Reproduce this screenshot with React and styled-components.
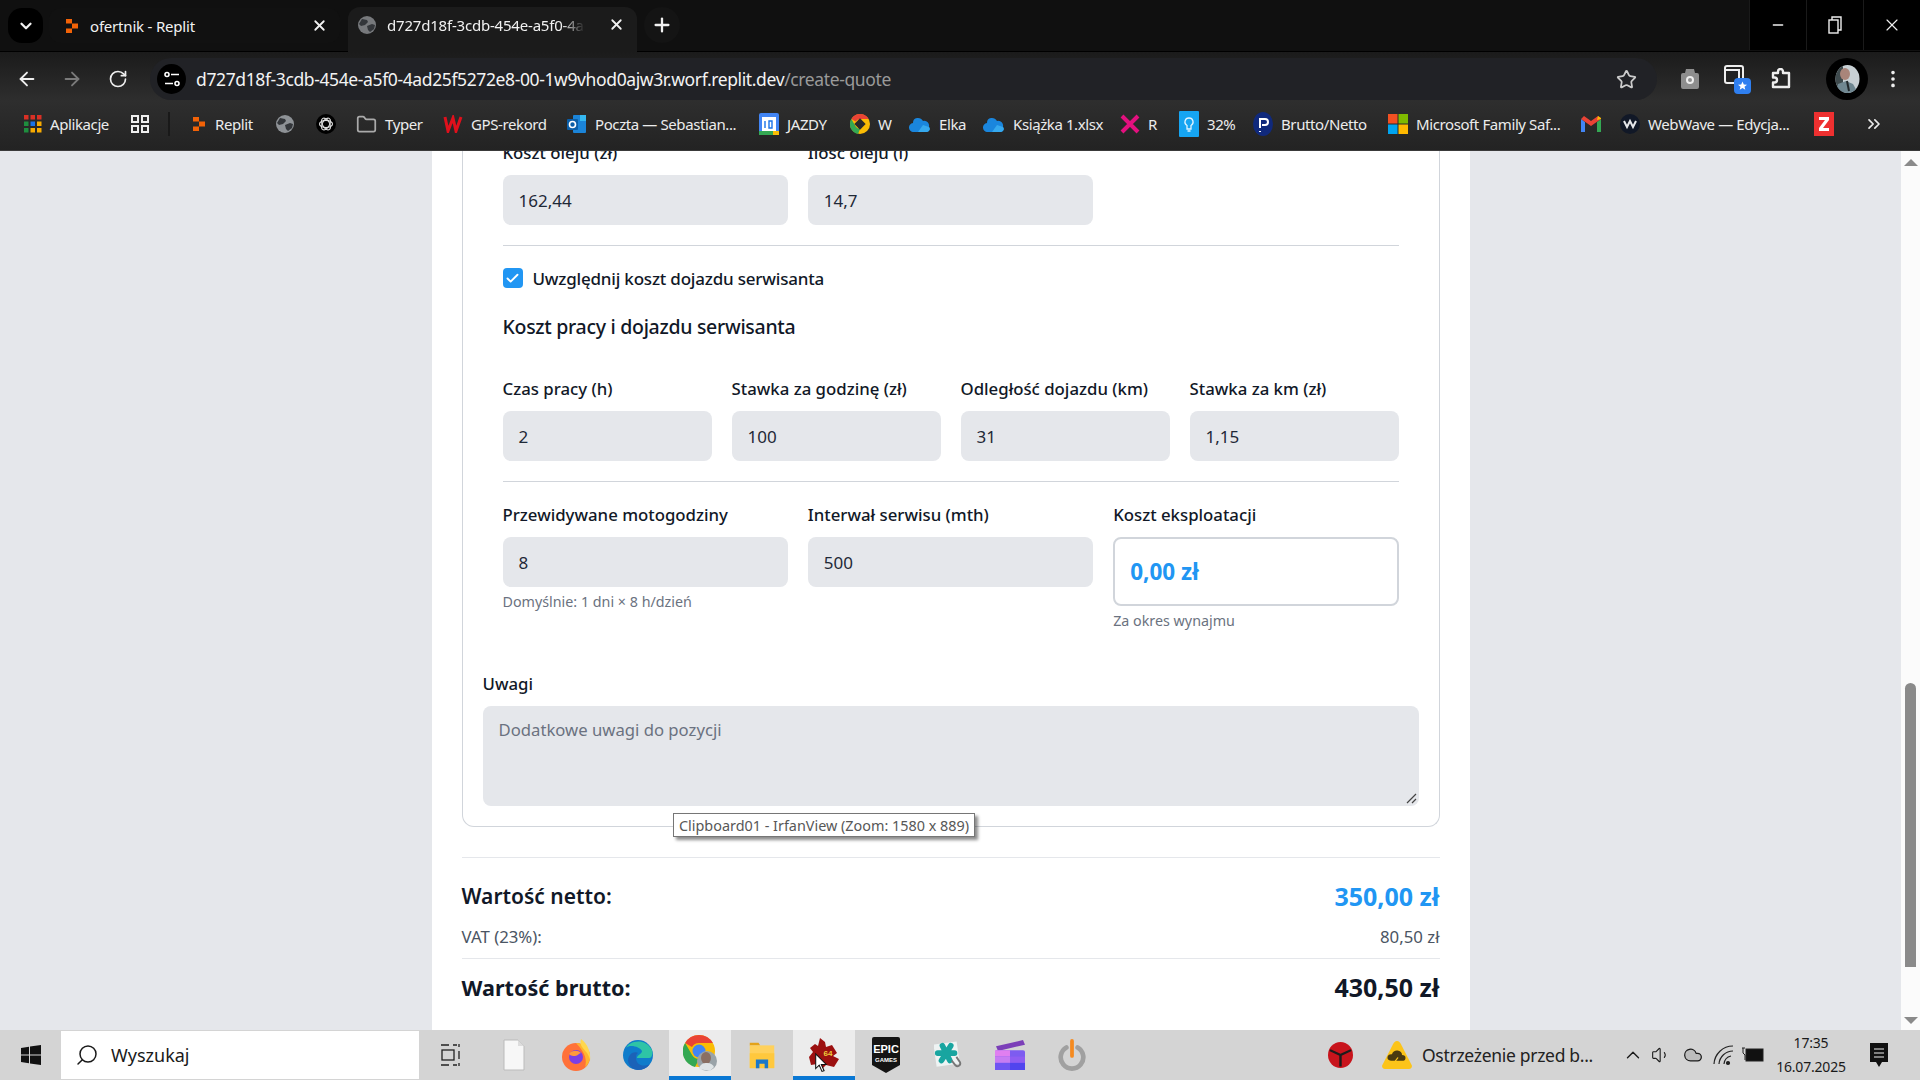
import styled, { createGlobalStyle } from 'styled-components';
import {
  ArrowLeft, ArrowRight, RotateCw, Star, X, Plus, ChevronDown, ChevronUp, EllipsisVertical,
  Search, Volume1, Cloud, ChevronsRight, Folder, Check, Minus,
} from 'lucide-react';

const GlobalStyle = createGlobalStyle`
  html, body { margin: 0; padding: 0; height: 100%; overflow: hidden; }
  body { font-family: "Noto Sans", "Liberation Sans", sans-serif; color: #111827; }
  #root { height: 100%; }
`;

const Screen = styled.div`
  display: flex;
  flex-direction: column;
  width: 1920px;
  height: 1080px;
  position: relative;
  overflow: hidden;
`;

/* browser chrome */
const TabStrip = styled.div`
  display: flex;
  height: 52px;
  padding-top: 7px;
  box-sizing: border-box;
  background: #101010;
  border-bottom: 1px solid #000;
  color: #f1f1f1;
  font-size: 15px;
  letter-spacing: -0.2px;
`;

const TabMenu = styled.div`
  width: 35px;
  height: 35px;
  margin: 1px 6px 0 8px;
  background: #000;
  border-radius: 14px;
  display: flex;
  align-items: center;
  justify-content: center;
`;

const Tab = styled.div`
  display: flex;
  align-items: center;
  flex: none;
  width: ${(p) => p.$w}px;
  box-sizing: border-box;
  padding-left: ${(p) => p.$pad}px;
  gap: ${(p) => (p.$active ? 11 : 10)}px;
  height: ${(p) => (p.$active ? 45 : 35)}px;
  margin: ${(p) => (p.$active ? '0 0 0 8px' : '1px 0 0 0')};
  padding-bottom: ${(p) => (p.$active ? 10 : 0)}px;
  background: ${(p) => (p.$active ? '#1b1b1b' : '#111')};
  border-radius: ${(p) => (p.$active ? '12px 12px 0 0' : '12px')};
`;

const TabTitle = styled.span`
  flex: 1;
  overflow: hidden;
  white-space: nowrap;
  ${(p) => p.$fade && 'mask-image: linear-gradient(to right, #000 88%, transparent);'}
`;

const TabClose = styled(X)`
  flex: none;
  margin: 0 12px;
`;

const NewTab = styled.div`
  width: 36px;
  height: 36px;
  margin-left: 7px;
  border-radius: 50%;
  background: #141414;
  display: flex;
  align-items: center;
  justify-content: center;
`;

const WindowButtons = styled.div`
  margin-left: auto;
  margin-top: -7px;
  display: flex;
  height: 50px;
  background: #000;
`;

const WindowButton = styled.div`
  width: 56px;
  display: flex;
  align-items: center;
  justify-content: center;
  border-left: 1px solid #1a1a1a;
`;

const Toolbars = styled.div`
  height: 95px;
  padding-top: 3px;
  background: linear-gradient(#1b1b1b, #2e2e2e 50%, #232323);
  border-bottom: 1px solid #3a3a3a;
`;

const NavRow = styled.div`
  display: flex;
  align-items: center;
  height: 48px;
  color: #f0f0f0;
`;

const NavIcon = styled.div`
  flex: none;
  width: ${(p) => p.$w}px;
  display: flex;
  justify-content: center;
  color: ${(p) => (p.$dim ? '#7a7a7a' : '#eee')};
`;

const Omnibox = styled.div`
  flex: none;
  width: 1507px;
  height: 42px;
  margin-left: 4px;
  border-radius: 21px;
  background: #212226;
  display: flex;
  align-items: center;
  box-sizing: border-box;
  padding: 0 20px 0 7px;
`;

const SiteBadge = styled.div`
  width: 29px;
  height: 30px;
  border-radius: 50%;
  background: #000;
  flex: none;
  display: flex;
  align-items: center;
  justify-content: center;
`;

const Url = styled.div`
  margin-left: 10px;
  flex: 1;
  font-size: 17.5px;
  letter-spacing: -0.38px;
  white-space: nowrap;
  color: #f3f3f3;
  span { color: #9a9a9a; }
`;

const Avatar = styled.div`
  width: 42px;
  height: 42px;
  margin-left: 15px;
  border-radius: 50%;
  background: #000;
  display: flex;
  align-items: center;
  justify-content: center;
  flex: none;
`;

const BookmarkRow = styled.div`
  display: flex;
  align-items: center;
  height: 42px;
  padding-left: 24px;
  color: #ececec;
  font-size: 15px;
  letter-spacing: -0.4px;
  white-space: nowrap;
`;

const Bookmark = styled.div`
  flex: none;
  width: ${(p) => p.$w}px;
  display: flex;
  align-items: center;
  gap: 8px;
`;

const BarDivider = styled.div`
  flex: none;
  width: 2px;
  height: 24px;
  background: #191919;
  margin-right: 21px;
`;

/* page */
const Viewport = styled.div`
  flex: 1;
  min-height: 0;
  display: flex;
  background: #e5e7eb;
  overflow: hidden;
`;

const PageArea = styled.div`
  flex: 1;
  display: flex;
  justify-content: center;
  overflow: hidden;
`;

const Panel = styled.main`
  width: 1038px;
  height: 900px;
  margin-top: -11px;
  padding: 0 30px;
  box-sizing: border-box;
  background: #fff;
  flex: none;
`;

const Card = styled.section`
  box-sizing: border-box;
  border: 1px solid #d1d5db;
  border-top: 0;
  border-radius: 0 0 12px 12px;
  padding: 0 20px 20px;
`;

const Inner = styled.div`
  padding: 0 20px;
`;

const FieldRow = styled.div`
  display: grid;
  grid-template-columns: repeat(${(p) => p.$cols}, 1fr);
  gap: 20px;
`;

const Field = styled.div`
  display: flex;
  flex-direction: column;
  min-width: 0;
`;

const Label = styled.label`
  display: block;
  height: 25px;
  line-height: 25px;
  margin-bottom: 10px;
  font-size: 16.8px;
  font-weight: 500;
  color: #111827;
  white-space: nowrap;
`;

const Input = styled.div`
  height: 50px;
  box-sizing: border-box;
  padding: 0 16px;
  display: flex;
  align-items: center;
  background: #e5e7eb;
  border-radius: 8px;
  font-size: 17px;
  color: #1f2937;
`;

const Divider = styled.hr`
  border: 0;
  height: 1px;
  margin: 20px 0;
  background: #d1d5db;
`;

const CheckRow = styled.div`
  display: flex;
  align-items: center;
  gap: 10px;
  height: 20px;
  margin-top: 22px;
  font-size: 17px;
  font-weight: 500;
  letter-spacing: -0.2px;
`;

const CheckBox = styled.div`
  width: 20px;
  height: 20px;
  border-radius: 4px;
  background: #2196f3;
  color: #fff;
  display: flex;
  align-items: center;
  justify-content: center;
`;

const SectionTitle = styled.h3`
  margin: 22px 0 32px;
  height: 34px;
  line-height: 34px;
  font-size: 19.5px;
  font-weight: 500;
  letter-spacing: -0.3px;
  color: #111827;
`;

const ResultBox = styled.div`
  height: 69px;
  box-sizing: border-box;
  border: 2px solid #d1d5db;
  border-radius: 8px;
  padding: 0 15px;
  display: flex;
  align-items: center;
  font-size: 22.5px;
  font-weight: 700;
  color: #2196f3;
`;

const Hint = styled.div`
  margin-top: 5px;
  height: 20px;
  line-height: 20px;
  font-size: 14.3px;
  color: #6b7280;
  white-space: nowrap;
`;

const NotesWrap = styled.div`
  margin-top: 40px;
`;

const Notes = styled.div`
  height: 100px;
  box-sizing: border-box;
  padding: 12px 16px;
  line-height: 24px;
  background: #e5e7eb;
  border-radius: 8px;
  font-size: 16.7px;
  color: #6b7280;
  position: relative;
`;

const Grip = styled.svg`
  position: absolute;
  right: 2px;
  bottom: 2px;
`;

const Summary = styled.div`
  margin-top: 30px;
  padding-top: 20px;
  border-top: 1px solid #e5e7eb;
`;

const SummaryRow = styled.div`
  display: flex;
  justify-content: space-between;
  align-items: center;
  height: ${(p) => p.$h}px;
  font-size: ${(p) => p.$size}px;
  font-weight: ${(p) => p.$weight};
  color: ${(p) => p.$color || '#111827'};
`;

const Amount = styled.span`
  color: ${(p) => p.$color || 'inherit'};
  font-weight: 700;
  font-size: 25px;
`;

const Rule = styled.div`
  height: 1px;
  background: #e5e7eb;
`;

const Scrollbar = styled.div`
  flex: none;
  width: 19px;
  background: #fbfbfb;
  display: flex;
  flex-direction: column;
  align-items: center;
  padding: 8px 0 6px;
  box-sizing: border-box;
`;

const Thumb = styled.div`
  margin-top: 517px;
  width: 11px;
  height: 284px;
  border-radius: 6px 6px 0 0;
  background: #8a8a8a;
`;

const Arrow = styled.div`
  width: 0;
  height: 0;
  margin-top: ${(p) => (p.$down ? 'auto' : '0')};
  border-left: 7px solid transparent;
  border-right: 7px solid transparent;
  border-${(p) => (p.$down ? 'top' : 'bottom')}: 7px solid #8a8a8a;
`;

const Tooltip = styled.div`
  position: absolute;
  left: 673px;
  top: 813px;
  height: 24px;
  box-sizing: border-box;
  padding: 0 5px;
  display: flex;
  align-items: center;
  font-size: 14.4px;
  background: #fff;
  border: 1px solid #767676;
  box-shadow: 3px 3px 3px rgba(0, 0, 0, 0.45);
  color: #575757;
  white-space: nowrap;
`;

/* taskbar */
const Taskbar = styled.footer`
  height: 50px;
  display: flex;
  align-items: stretch;
  background: #d4d4d4;
  color: #1a1a1a;
  flex: none;
`;

const StartButton = styled.div`
  width: 61px;
  display: flex;
  align-items: center;
  justify-content: center;
  flex: none;
`;

const SearchBox = styled.div`
  width: 358px;
  margin: 1px 0;
  background: #fff;
  display: flex;
  align-items: center;
  gap: 12px;
  padding-left: 14px;
  box-sizing: border-box;
  font-size: 18px;
  flex: none;
`;

const SearchGlyph = styled(Search)`
  transform: scaleX(-1);
`;

const TaskCell = styled.div`
  flex: none;
  width: ${(p) => p.$w || 62}px;
  display: flex;
  align-items: center;
  justify-content: center;
  box-sizing: border-box;
  background: ${(p) => (p.$open ? '#ececec' : 'transparent')};
  border-bottom: ${(p) => (p.$open ? '4px solid #0a78d4' : '0')};
`;

const Spacer = styled.div`
  flex: 1;
`;

const Tray = styled.div`
  display: flex;
  align-items: center;
  flex: none;
  padding-right: 17px;
`;

const TrayCell = styled.div`
  flex: none;
  width: ${(p) => p.$w}px;
  margin-right: ${(p) => p.$right || 0}px;
  display: flex;
  align-items: center;
  justify-content: center;
`;

const NewsText = styled.div`
  width: 199px;
  font-size: 17.5px;
  letter-spacing: -0.3px;
  white-space: nowrap;
  color: #222;
`;

const Clock = styled.div`
  width: 88px;
  text-align: center;
  font-size: 14px;
  letter-spacing: -0.2px;
  line-height: 24px;
`;

const Cursor = styled.svg`
  position: absolute;
  left: 815px;
  top: 1053px;
`;

const ReplitIcon = ({ size = 16 }) => (
  <svg width={size} height={size} viewBox="0 0 16 16">
    <path d="M2 1h6v4.500H2zM8 5.500h6v5H8zM2 10.500h6V15H2z" fill="#f26207" />
  </svg>
);

const Globe = ({ size = 18, color = '#8e9296' }) => (
  <svg width={size} height={size} viewBox="0 0 18 18">
    <circle cx="9" cy="9" r="9" fill={color} />
    <path d="M4 3l5 1 1 2-3 3-4 1-2-2zM9 10l5-2 3 1-1 4-4 3-2-2z" fill="#33363a" />
  </svg>
);

const SiteIcon = () => (
  <svg width="18" height="18" viewBox="0 0 18 18" fill="none" stroke="#fff" strokeWidth="1.600">
    <circle cx="4" cy="4.500" r="2" />
    <path d="M8 4.500h8M2 13.500h8" />
    <circle cx="14" cy="13.500" r="2" />
  </svg>
);

const AppsGrid = () => {
  const colors = ['#d93025', '#d93025', '#d93025', '#1e8e3e', '#1a73e8', '#f9ab00', '#1e8e3e', '#f9ab00', '#f9ab00'];
  return (
    <svg width="18" height="18" viewBox="0 0 18 18">
      {colors.map((c, i) => (
        <rect key={i} x={(i % 3) * 6.500} y={Math.floor(i / 3) * 6.500} width="4.500" height="4.500" fill={c} />
      ))}
    </svg>
  );
};

const TilesIcon = () => (
  <svg width="20" height="20" viewBox="0 0 20 20" fill="none" stroke="#eee" strokeWidth="2">
    <rect x="2" y="2" width="6" height="6" />
    <rect x="12" y="2" width="6" height="6" />
    <rect x="2" y="12" width="6" height="6" />
    <rect x="12" y="12" width="6" height="6" />
  </svg>
);

const ChatGptIcon = () => (
  <svg width="20" height="20" viewBox="0 0 20 20">
    <circle cx="10" cy="10" r="10" fill="#000" />
    <g fill="none" stroke="#ddd" strokeWidth="1.100">
      <ellipse cx="10" cy="10" rx="6.500" ry="3.600" />
      <ellipse cx="10" cy="10" rx="6.500" ry="3.600" transform="rotate(60 10 10)" />
      <ellipse cx="10" cy="10" rx="6.500" ry="3.600" transform="rotate(120 10 10)" />
    </g>
  </svg>
);

const GpsIcon = () => (
  <svg width="20" height="18" viewBox="0 0 20 18" fill="none" stroke="#e0101c" strokeWidth="3">
    <path d="M2 2l3 14 5-13 3 13 5-14" />
  </svg>
);

const OutlookIcon = () => (
  <svg width="20" height="20" viewBox="0 0 20 20">
    <rect x="6" y="1" width="13" height="18" rx="1" fill="#1b84d8" />
    <rect x="13" y="1" width="6" height="6" fill="#35b8f1" />
    <rect x="0" y="5" width="11" height="11" rx="1" fill="#0a5ea8" />
    <circle cx="5.500" cy="10.500" r="3" fill="none" stroke="#fff" strokeWidth="1.600" />
  </svg>
);

const CalendarIcon = () => (
  <svg width="20" height="22" viewBox="0 0 20 22">
    <rect width="20" height="22" rx="2" fill="#4285f4" />
    <rect x="3" y="4" width="14" height="14" fill="#fff" />
    <rect y="18" width="14" height="4" fill="#34a853" />
    <rect x="14" y="18" width="6" height="4" fill="#fbbc04" />
    <path d="M6 8v7M10 8h3v7h-3z" stroke="#1a73e8" strokeWidth="1.400" fill="none" />
  </svg>
);

const ChromeRing = ({ size = 20 }) => (
  <svg width={size} height={size} viewBox="0 0 20 20">
    <circle cx="10" cy="10" r="10" fill="#fbbc04" />
    <path d="M10 0a10 10 0 0 1 8.660 5H10a5 5 0 0 0-4.330 2.500L1.340 5A10 10 0 0 1 10 0z" fill="#ea4335" />
    <path d="M1.340 5l4.330 7.500A5 5 0 0 0 10 15l-2 5A10 10 0 0 1 1.340 5z" fill="#34a853" />
    <rect x="6" y="6" width="8" height="8" transform="rotate(45 10 10)" fill="#2a2a2a" />
  </svg>
);

const OneDriveIcon = () => (
  <svg width="22" height="16" viewBox="0 0 22 16">
    <path d="M8 2a6 6 0 0 1 6 3 5 5 0 0 1 6 6 3 3 0 0 1-2 5H5a4.500 4.500 0 0 1-1-9 5 5 0 0 1 4-5z" fill="#1a86dd" />
    <path d="M9 16l5-7 6 2a3 3 0 0 1-2 5z" fill="#36a9ee" />
  </svg>
);

const CrossIcon = () => (
  <svg width="20" height="22" viewBox="0 0 20 22" fill="none" stroke="#e3107f" strokeWidth="4">
    <path d="M2 3l16 16M18 3L2 19" />
  </svg>
);

const BulbIcon = () => (
  <svg width="20" height="26" viewBox="0 0 20 26">
    <rect width="20" height="26" rx="1" fill="#16a5f2" />
    <path d="M10 7a4 4 0 0 1 2 7.500V18H8v-3.500A4 4 0 0 1 10 7zM8.500 20h3" fill="none" stroke="#dff3ff" strokeWidth="1.300" />
  </svg>
);

const BruttoIcon = () => (
  <svg width="20" height="24" viewBox="0 0 20 24">
    <ellipse cx="10" cy="12" rx="10" ry="12" fill="#10297c" />
    <path d="M7 16V7h5a3 3 0 0 1 0 6H9M7 20v-1" fill="none" stroke="#fff" strokeWidth="2" />
  </svg>
);

const MsIcon = ({ size = 20 }) => (
  <svg width={size} height={size} viewBox="0 0 20 20">
    <rect width="9.500" height="9.500" fill="#f25022" />
    <rect x="10.500" width="9.500" height="9.500" fill="#7fba00" />
    <rect y="10.500" width="9.500" height="9.500" fill="#00a4ef" />
    <rect x="10.500" y="10.500" width="9.500" height="9.500" fill="#ffb900" />
  </svg>
);

const GmailIcon = () => (
  <svg width="20" height="16" viewBox="0 0 20 16">
    <path d="M0 3v13h4V6z" fill="#4285f4" />
    <path d="M16 6v10h4V3z" fill="#34a853" />
    <path d="M0 3l10 7 10-7-3-3-7 5-7-5z" fill="#ea4335" />
    <path d="M16 4l4-1 0-1-3-2z" fill="#fbbc04" />
  </svg>
);

const WaveIcon = () => (
  <svg width="20" height="20" viewBox="0 0 20 20">
    <circle cx="10" cy="10" r="10" fill="#111827" />
    <path d="M4 7l3 6 3-6 3 6 3-6" fill="none" stroke="#e5e7eb" strokeWidth="2" />
  </svg>
);

const ZIcon = () => (
  <svg width="20" height="24" viewBox="0 0 20 24">
    <rect width="20" height="24" fill="#ee3030" />
    <path d="M5 5h10v3l-6 8h6v3H5v-3l6-8H5z" fill="#fff" />
  </svg>
);

const Camera = () => (
  <svg width="18" height="20" viewBox="0 0 18 20">
    <path d="M5 0h8l1 4h2a2 2 0 0 1 2 2v12a2 2 0 0 1-2 2H2a2 2 0 0 1-2-2V6a2 2 0 0 1 2-2h2z" fill="#8e8e8e" />
    <circle cx="9" cy="11" r="4" fill="#eee" />
    <circle cx="9" cy="11" r="2" fill="#8e8e8e" />
  </svg>
);

const TabSwitcher = () => (
  <svg width="28" height="30" viewBox="0 0 28 30">
    <path d="M4 2h14a2 2 0 0 1 2 2v13a2 2 0 0 1-2 2H4a2 2 0 0 1-2-2V4a2 2 0 0 1 2-2z" fill="#222" stroke="#eee" strokeWidth="2" />
    <path d="M2 6h14v13" fill="none" stroke="#eee" strokeWidth="2" />
    <rect x="11" y="14" width="17" height="16" rx="4" fill="#2f7ff0" />
    <path d="M19.500 17.500l1.300 3 3.200.2-2.500 2 .8 3.100-2.800-1.700-2.800 1.700.8-3.100-2.500-2 3.200-.2z" fill="#fff" />
  </svg>
);

const PuzzleGlyph = () => (
  <svg width="22" height="22" viewBox="0 0 22 22" fill="none" stroke="#eee" strokeWidth="2.400" strokeLinejoin="round">
    <path d="M3 5h5V3.500a2.500 2.500 0 0 1 5 0V5h6v14H3v-4.500h1.500a2.500 2.500 0 0 0 0-5H3z" />
  </svg>
);

const Portrait = () => (
  <svg width="25" height="28" viewBox="0 0 25 28">
    <clipPath id="pc"><ellipse cx="12.500" cy="14" rx="12" ry="14" /></clipPath>
    <g clipPath="url(#pc)">
      <rect width="25" height="28" fill="#c8d0d4" />
      <rect width="8" height="28" fill="#3e4a4d" />
      <ellipse cx="10" cy="9" rx="5" ry="6" fill="#a9857a" />
      <path d="M0 28l3-9 8-3 7 3 5 9z" fill="#6f8791" />
      <path d="M12 16l2 10" stroke="#20282b" strokeWidth="2" />
    </g>
  </svg>
);

const RestoreIcon = () => (
  <svg width="14" height="18" viewBox="0 0 14 18" fill="none" stroke="#eee" strokeWidth="1.400">
    <rect x="1" y="4" width="9" height="13" />
    <path d="M4 4V1h9v13h-3" />
  </svg>
);

const WinLogo = () => (
  <svg width="20" height="20" viewBox="0 0 20 20">
    <path d="M0 3l8-1.200V9.500H0zM9 1.600L20 0v9.500H9zM0 10.500h8v7.700L0 17zM9 10.500h11V20L9 18.400z" fill="#111" />
  </svg>
);

const TaskView = () => (
  <svg width="20" height="24" viewBox="0 0 20 24" fill="none" stroke="#222" strokeWidth="1.300">
    <path d="M0 2h8M0 22h8M12 2h4M12 22h4M18 1v3M18 8v8M18 20v3" />
    <rect x="1" y="7" width="12" height="10" />
  </svg>
);

const BlankFile = () => (
  <svg width="22" height="32" viewBox="0 0 22 32">
    <path d="M1 1h14l6 6v24H1z" fill="#f7f7f7" stroke="#bbb" />
    <path d="M15 1v6h6" fill="#ddd" />
  </svg>
);

const Firefox = () => (
  <svg width="30" height="34" viewBox="0 0 30 34">
    <circle cx="15" cy="19" r="14" fill="#ff7139" />
    <path d="M15 5a14 14 0 0 1 14 14c0 4-2 8-5 10 2-6 1-14-9-24z" fill="#ffb52e" />
    <path d="M20 1c-2 6 2 9 6 14 2 3 3 6 3 8 1-8-2-17-9-22z" fill="#ffd74d" />
    <circle cx="15" cy="19" r="7" fill="#7b3fe4" />
    <path d="M8 16c3-4 9-4 12-1-2 0-3 3-6 3-2 0-4 0-6-2z" fill="#ff9a3c" />
  </svg>
);

const Edge = () => (
  <svg width="30" height="32" viewBox="0 0 30 32">
    <circle cx="15" cy="16" r="15" fill="#0f7ccb" />
    <path d="M3 9C6 2 22-2 29 11c1 4 0 8-3 8H14c0-3 5-4 5-7-2-4-12-7-16-3z" fill="#2ec4a6" />
    <path d="M13 19c0 6 6 10 14 6-3 4-7 6-12 6-5 0-9-4-10-9 0-3 1-6 4-8 2-1 5-1 6 0-2 1-2 3-2 5z" fill="#1b62b8" />
  </svg>
);

const ChromePhoto = () => (
  <svg width="34" height="36" viewBox="0 0 34 36">
    <circle cx="16" cy="16" r="16" fill="#fbbc04" />
    <path d="M16 0a16 16 0 0 1 13.900 8H16a8 8 0 0 0-7 4L2.100 8A16 16 0 0 1 16 0z" fill="#ea4335" />
    <path d="M2.100 8l7 12a8 8 0 0 0 7 4L12 32A16 16 0 0 1 2.100 8z" fill="#34a853" />
    <circle cx="16" cy="16" r="6.500" fill="#4285f4" />
    <circle cx="24" cy="26" r="10" fill="#9aa3a8" />
    <ellipse cx="23" cy="23" rx="5" ry="6" fill="#8a6f63" />
    <path d="M16 34c1-5 4-6 8-6s6 2 7 4l-4 4z" fill="#dfe4e6" />
  </svg>
);

const FilesIcon = () => (
  <svg width="28" height="28" viewBox="0 0 32 32">
    <path d="M2 2h10l2 3H2z" fill="#e3a21a" />
    <rect x="2" y="5" width="28" height="26" fill="#ffd15c" />
    <rect x="2" y="14" width="28" height="17" fill="#ffc83d" />
    <path d="M9 31V21h14v10h-4v-5h-6v5z" fill="#1c78c8" />
  </svg>
);

const PuzzleApp = () => (
  <svg width="32" height="32" viewBox="0 0 32 32">
    <path d="M12 1l5 4 1 5 6-2 5 8-4 3 6 3-5 8-8-2-4 4-5-5-6 1-2-8 4-5-3-4 5-4 3 2z" fill="#9c1010" />
    <text x="20" y="19" textAnchor="middle" fontSize="8" fontWeight="700" fill="#f0cc3a" fontFamily="'Liberation Sans', sans-serif">64</text>
  </svg>
);

const EpicIcon = () => (
  <svg width="28" height="36" viewBox="0 0 28 36">
    <path d="M0 2a2 2 0 0 1 2-2h24a2 2 0 0 1 2 2v26l-14 8-14-8z" fill="#141414" />
    <text x="14" y="16" textAnchor="middle" fontSize="11" fontWeight="800" fill="#fff" fontFamily="'Liberation Sans', sans-serif">EPIC</text>
    <text x="14" y="25" textAnchor="middle" fontSize="6" fontWeight="700" fill="#fff" fontFamily="'Liberation Sans', sans-serif">GAMES</text>
  </svg>
);

const TealApp = () => (
  <svg width="28" height="30" viewBox="0 0 30 32">
    <rect x="1" y="3" width="25" height="24" transform="rotate(-8 14 15)" fill="#eef3f3" />
    <g stroke="#18a5a0" strokeWidth="6" strokeLinecap="round">
      <path d="M9 6l8 16M18 6L8 22M4 14h18" />
    </g>
    <path d="M24 18l4 6a3 3 0 0 1-5 3l-4-5" fill="none" stroke="#777" strokeWidth="2" />
  </svg>
);

const ClapApp = () => (
  <svg width="30" height="30" viewBox="0 0 30 38" preserveAspectRatio="none">
    <path d="M1 8L28 0l2 6L3 14z" fill="#7b3fb8" />
    <rect y="13" width="30" height="25" rx="2" fill="#7d5cf0" />
    <rect y="13" width="15" height="8" fill="#e07ff0" />
    <rect y="21" width="15" height="8" fill="#c77cf2" />
    <rect x="15" y="21" width="15" height="8" fill="#8f5df2" />
    <rect x="15" y="29" width="15" height="9" fill="#5145ee" />
    <rect y="29" width="15" height="9" fill="#6f55f2" />
  </svg>
);

const PowerApp = () => (
  <svg width="28" height="32" viewBox="0 0 28 34" fill="none">
    <path d="M8 9a12 12 0 1 0 12 0" stroke="#a0a0a0" strokeWidth="5" strokeLinecap="round" />
    <path d="M14 2v16" stroke="#f58a1f" strokeWidth="4" strokeLinecap="round" />
  </svg>
);

const LenovoIcon = () => (
  <svg width="25" height="26" viewBox="0 0 26 32" preserveAspectRatio="none">
    <ellipse cx="13" cy="16" rx="13" ry="16" fill="#c8141c" />
    <path d="M2 10l11 6 11-6M13 16v14" stroke="#1c1c1c" strokeWidth="2.500" fill="none" />
  </svg>
);

const WarningIcon = () => (
  <svg width="30" height="28" viewBox="0 0 30 34" preserveAspectRatio="none">
    <path d="M15 0c2 0 3 2 4 4l11 26c0 2-1 4-3 4H3c-2 0-3-2-3-4L11 4c1-2 2-4 4-4z" fill="#fcc419" />
    <path d="M9 24a4 4 0 0 1 1-8 5 5 0 0 1 10 1 3.500 3.500 0 0 1 0 7z" fill="#4a3a10" />
    <path d="M16 20l-3 5h3l-2 4" stroke="#fcc419" strokeWidth="1.300" fill="none" />
  </svg>
);

const WifiIcon = () => (
  <svg width="22" height="22" viewBox="0 0 22 22" fill="none" stroke="#222" strokeWidth="1.200">
    <path d="M1 20A19 19 0 0 1 20 2M6 20A14 14 0 0 1 20 7M11 20a9 9 0 0 1 7-8" />
    <circle cx="15" cy="19" r="1.500" fill="#222" />
  </svg>
);

const BatteryIcon = () => (
  <svg width="22" height="20" viewBox="0 0 22 20">
    <rect x="4" y="4" width="17" height="12" fill="#111" stroke="#222" />
    <path d="M1 3v5l2 2v5M0 3h3" stroke="#222" fill="none" />
  </svg>
);

const NotifyIcon = () => (
  <svg width="20" height="24" viewBox="0 0 20 24">
    <path d="M1 0h18v19h-6l-3 5-3-5H1z" fill="#111" />
    <path d="M5 6h10M5 10h10M5 14h10" stroke="#eee" strokeWidth="1.200" />
  </svg>
);

const App = () => (
  <Screen>
    <GlobalStyle />
    <TabStrip>
      <TabMenu><ChevronDown size={18} strokeWidth={3} /></TabMenu>
      <Tab $w={291} $pad={15}>
        <ReplitIcon />
        <TabTitle>ofertnik - Replit</TabTitle>
        <TabClose size={17} strokeWidth={2.500} />
      </Tab>
      <Tab $w={289} $pad={10} $active>
        <Globe size={18} color="#77797c" />
        <TabTitle $fade>d727d18f-3cdb-454e-a5f0-4ad2</TabTitle>
        <TabClose size={17} strokeWidth={2.500} />
      </Tab>
      <NewTab><Plus size={22} strokeWidth={2.500} /></NewTab>
      <WindowButtons>
        <WindowButton><Minus size={16} color="#eee" /></WindowButton>
        <WindowButton><RestoreIcon /></WindowButton>
        <WindowButton><X size={20} color="#eee" strokeWidth={1.400} /></WindowButton>
      </WindowButtons>
    </TabStrip>
    <Toolbars>
      <NavRow>
        <NavIcon $w={54}><ArrowLeft size={22} /></NavIcon>
        <NavIcon $w={36} $dim><ArrowRight size={22} /></NavIcon>
        <NavIcon $w={56}><RotateCw size={20} /></NavIcon>
        <Omnibox>
          <SiteBadge><SiteIcon /></SiteBadge>
          <Url>d727d18f-3cdb-454e-a5f0-4ad25f5272e8-00-1w9vhod0ajw3r.worf.replit.dev<span>/create-quote</span></Url>
          <Star size={21} color="#ccc" />
        </Omnibox>
        <NavIcon $w={66}><Camera /></NavIcon>
        <NavIcon $w={28}><TabSwitcher /></NavIcon>
        <NavIcon $w={60}><PuzzleGlyph /></NavIcon>
        <Avatar><Portrait /></Avatar>
        <NavIcon $w={50}><EllipsisVertical size={22} /></NavIcon>
      </NavRow>
      <BookmarkRow>
        <Bookmark $w={106}><AppsGrid />Aplikacje</Bookmark>
        <Bookmark $w={38}><TilesIcon /></Bookmark>
        <BarDivider />
        <Bookmark $w={85}><ReplitIcon />Replit</Bookmark>
        <Bookmark $w={40}><Globe /></Bookmark>
        <Bookmark $w={40}><ChatGptIcon /></Bookmark>
        <Bookmark $w={87}><Folder size={21} color="#aaa" />Typer</Bookmark>
        <Bookmark $w={124}><GpsIcon />GPS-rekord</Bookmark>
        <Bookmark $w={192}><OutlookIcon />Poczta — Sebastian...</Bookmark>
        <Bookmark $w={91}><CalendarIcon />JAZDY</Bookmark>
        <Bookmark $w={59}><ChromeRing />W</Bookmark>
        <Bookmark $w={74}><OneDriveIcon />Elka</Bookmark>
        <Bookmark $w={137}><OneDriveIcon />Książka 1.xlsx</Bookmark>
        <Bookmark $w={59}><CrossIcon />R</Bookmark>
        <Bookmark $w={74}><BulbIcon />32%</Bookmark>
        <Bookmark $w={135}><BruttoIcon />Brutto/Netto</Bookmark>
        <Bookmark $w={193}><MsIcon />Microsoft Family Saf...</Bookmark>
        <Bookmark $w={39}><GmailIcon /></Bookmark>
        <Bookmark $w={194}><WaveIcon />WebWave — Edycja...</Bookmark>
        <Bookmark $w={50}><ZIcon /></Bookmark>
        <ChevronsRight size={20} />
      </BookmarkRow>
    </Toolbars>

    <Viewport>
      <PageArea>
        <Panel>
          <Card>
            <Inner>
              <FieldRow $cols={3}>
                <Field><Label>Koszt oleju (zł)</Label><Input>162,44</Input></Field>
                <Field><Label>Ilość oleju (l)</Label><Input>14,7</Input></Field>
              </FieldRow>
              <Divider />
              <CheckRow><CheckBox><Check size={15} strokeWidth={3} /></CheckBox>Uwzględnij koszt dojazdu serwisanta</CheckRow>
              <SectionTitle>Koszt pracy i dojazdu serwisanta</SectionTitle>
              <FieldRow $cols={4}>
                <Field><Label>Czas pracy (h)</Label><Input>2</Input></Field>
                <Field><Label>Stawka za godzinę (zł)</Label><Input>100</Input></Field>
                <Field><Label>Odległość dojazdu (km)</Label><Input>31</Input></Field>
                <Field><Label>Stawka za km (zł)</Label><Input>1,15</Input></Field>
              </FieldRow>
              <Divider />
              <FieldRow $cols={3}>
                <Field>
                  <Label>Przewidywane motogodziny</Label>
                  <Input>8</Input>
                  <Hint>Domyślnie: 1 dni × 8 h/dzień</Hint>
                </Field>
                <Field><Label>Interwał serwisu (mth)</Label><Input>500</Input></Field>
                <Field>
                  <Label>Koszt eksploatacji</Label>
                  <ResultBox>0,00 zł</ResultBox>
                  <Hint>Za okres wynajmu</Hint>
                </Field>
              </FieldRow>
            </Inner>
            <NotesWrap>
              <Label>Uwagi</Label>
              <Notes>
                Dodatkowe uwagi do pozycji
                <Grip width="12" height="12" viewBox="0 0 12 12" stroke="#444" strokeWidth="1.200">
                  <path d="M2 11L11 2M7 11l4-4" />
                </Grip>
              </Notes>
            </NotesWrap>
          </Card>
          <Summary>
            <SummaryRow $h={36} $size={21} $weight={600}>
              <span>Wartość netto:</span>
              <Amount $color="#2196f3">350,00 zł</Amount>
            </SummaryRow>
            <SummaryRow $h={44} $size={16.8} $weight={400} $color="#4b5563">
              <span>VAT (23%):</span>
              <span>80,50 zł</span>
            </SummaryRow>
            <Rule />
            <SummaryRow $h={56} $size={21.6} $weight={700}>
              <span>Wartość brutto:</span>
              <Amount>430,50 zł</Amount>
            </SummaryRow>
          </Summary>
        </Panel>
      </PageArea>
      <Scrollbar>
        <Arrow />
        <Thumb />
        <Arrow $down />
      </Scrollbar>
    </Viewport>

    <Tooltip>Clipboard01 - IrfanView (Zoom: 1580 x 889)</Tooltip>

    <Taskbar>
      <StartButton><WinLogo /></StartButton>
      <SearchBox><SearchGlyph size={24} strokeWidth={1.500} />Wyszukaj</SearchBox>
      <TaskCell $w={64}><TaskView /></TaskCell>
      <TaskCell><BlankFile /></TaskCell>
      <TaskCell><Firefox /></TaskCell>
      <TaskCell><Edge /></TaskCell>
      <TaskCell $open><ChromePhoto /></TaskCell>
      <TaskCell><FilesIcon /></TaskCell>
      <TaskCell $open><PuzzleApp /></TaskCell>
      <TaskCell><EpicIcon /></TaskCell>
      <TaskCell><TealApp /></TaskCell>
      <TaskCell><ClapApp /></TaskCell>
      <TaskCell><PowerApp /></TaskCell>
      <Spacer />
      <Tray>
        <TrayCell $w={32} $right={16}><LenovoIcon /></TrayCell>
        <TrayCell $w={50}><WarningIcon /></TrayCell>
        <NewsText>Ostrzeżenie przed b...</NewsText>
        <TrayCell $w={24}><ChevronUp size={22} strokeWidth={1.500} /></TrayCell>
        <TrayCell $w={32}><Volume1 size={20} strokeWidth={1.300} /></TrayCell>
        <TrayCell $w={32}><Cloud size={20} strokeWidth={1.500} fill="#bdbdbd" /></TrayCell>
        <TrayCell $w={30}><WifiIcon /></TrayCell>
        <TrayCell $w={28}><BatteryIcon /></TrayCell>
        <Clock>17:35<br />16.07.2025</Clock>
        <TrayCell $w={48}><NotifyIcon /></TrayCell>
      </Tray>
    </Taskbar>
    <Cursor width="14" height="20" viewBox="0 0 20 28">
      <path d="M1 1v21l5-5 4 9 3-1-4-9h7z" fill="#fff" stroke="#111" strokeWidth="1.500" />
    </Cursor>
  </Screen>
);

export default App;
